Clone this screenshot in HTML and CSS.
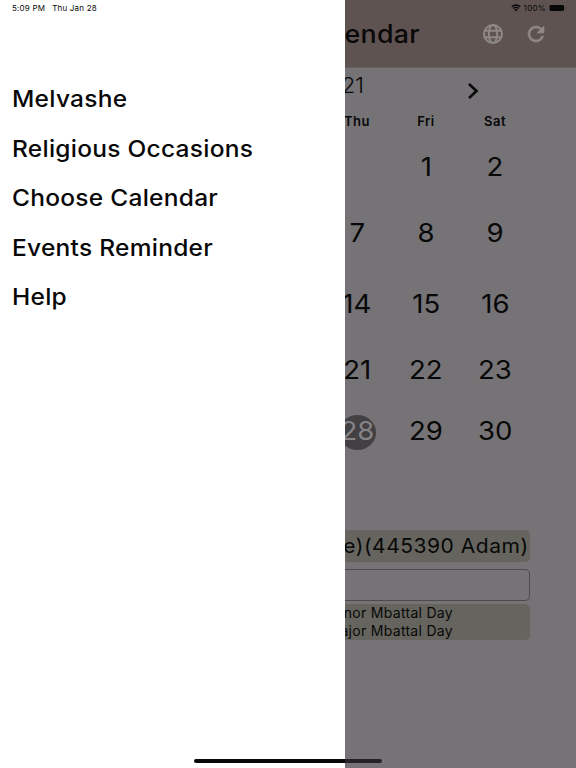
FILE: index.html
```
<!DOCTYPE html>
<html lang="en">
<head>
    <meta charset="UTF-8">
    <meta name="viewport" content="width=device-width, initial-scale=1.0">
    <title>Calendar</title>
    <link rel="stylesheet" href="styles.css">
</head>
<body>
    <nav class="drawer">
        <div class="clock"><span>5:09 PM</span><span>Thu Jan 28</span></div>
        <ul class="menu">
            <li>Melvashe</li>
            <li>Religious Occasions</li>
            <li>Choose Calendar</li>
            <li>Events Reminder</li>
            <li>Help</li>
        </ul>
    </nav>
    <main class="page">
        <header class="toolbar">
            <div class="status">
                <svg class="wifi" viewBox="0 0 10 8"><path d="M.7 2.8Q5-.8 9.300 2.800M2.300 4.500Q5 2.300 7.700 4.500" fill="none" stroke="#080707" stroke-width="1.300"/><path d="M3.300 5.600Q5 4.500 6.700 5.600L5 7.400Z" fill="#080707"/></svg>
                <span>100%</span>
                <svg class="battery" viewBox="0 0 18 8"><rect x=".5" y="1" width="14.500" height="6" rx="1.400" fill="#080707"/><path d="M16.500 3v2" stroke="#4a403f"/></svg>
            </div>
            <div class="heading">
                <h1>Calendar</h1>
                <svg class="globe" viewBox="0 0 22 22"><g fill="none" stroke="#8e8886" stroke-width="2"><circle cx="11" cy="11" r="9"/><ellipse cx="11" cy="11" rx="4.200" ry="9"/><path d="M3 7.700h16M3 14.300h16"/></g></svg>
                <svg class="refresh" viewBox="0 0 24 24"><path fill="#8e8886" stroke="#8e8886" stroke-width=".6" d="M17.650 6.350A7.960 7.960 0 0 0 12 4a8 8 0 1 0 7.730 10h-2.080A6 6 0 1 1 12 6c1.660 0 3.140.69 4.220 1.780L13 11h7V4z"/></svg>
            </div>
        </header>
        <div class="month">
            <span>2021</span>
            <svg class="next" viewBox="0 0 12 18"><path d="M2 2l7.500 7L2 16" fill="none" stroke="#080808" stroke-width="2.600"/></svg>
        </div>
        <div class="weekdays"><span>Thu</span><span>Fri</span><span>Sat</span></div>
        <div class="days">
            <span></span><span>1</span><span>2</span>
            <span>7</span><span>8</span><span>9</span>
            <span>14</span><span>15</span><span>16</span>
            <span>21</span><span>22</span><span>23</span>
            <span class="today">28</span><span>29</span><span>30</span>
        </div>
        <div class="date"><span>e)(445390 Adam)</span></div>
        <div class="field"></div>
        <div class="events">
            <span>Minor Mbattal Day</span>
            <span>Major Mbattal Day</span>
        </div>
    </main>
    <div class="home-bar"></div>
</body>
</html>
```
FILE: styles.css
```
* {
    box-sizing: border-box;
}
body {
    margin: 0;
    display: flex;
    height: 768px;
    overflow: hidden;
    position: relative;
    background: #fff;
    color: #080808;
    font-family: Inter, "Liberation Sans", sans-serif;
}
.drawer {
    width: 345px;
    flex: none;
}
.clock {
    display: flex;
    gap: 7px;
    height: 16px;
    padding-left: 12px;
    font-size: 8px;
    line-height: 16px;
    letter-spacing: 0.2px;
}
.menu {
    list-style: none;
    margin: 58px 0 0;
    padding: 0 0 0 11.5px;
}
.menu li {
    width: 260px;
    height: 49.5px;
    font-size: 23px;
    font-weight: 450;
    line-height: 50px;
    letter-spacing: 0.25px;
    white-space: nowrap;
    transform: scaleX(1.065);
    transform-origin: left;
}
.page {
    width: 231px;
    overflow: hidden;
    background: #757376;
    white-space: nowrap;
}
.toolbar {
    height: 68px;
    background: #5f5351;
    border-bottom: 1px solid #666061;
}
.status {
    display: flex;
    justify-content: flex-end;
    align-items: center;
    gap: 3px;
    height: 16px;
    padding-right: 9px;
    font-size: 8px;
    letter-spacing: 0.3px;
}
.wifi {
    width: 10px;
    height: 8px;
}
.battery {
    width: 18px;
    height: 8px;
}
.heading {
    display: flex;
    align-items: center;
    height: 36px;
}
.heading h1 {
    display: flex;
    justify-content: flex-end;
    width: 75px;
    margin: 0 62px 0 0;
    font-size: 25px;
    font-weight: 500;
    letter-spacing: 0.3px;
    transform: scaleX(1.07);
    transform-origin: right;
}
.globe {
    width: 22px;
    height: 22px;
    margin-right: 20px;
}
.refresh {
    width: 24px;
    height: 24px;
}
.month {
    display: flex;
    align-items: center;
    height: 36px;
    font-size: 22px;
    font-weight: 300;
}
.month span {
    display: flex;
    justify-content: flex-end;
    width: 19px;
    margin: -2px 103px 0 0;
}
.next {
    width: 12px;
    height: 18px;
    margin-top: 10px;
}
.weekdays,
.days {
    display: grid;
    grid-template-columns: repeat(3, 69px);
    margin-left: -22.5px;
    text-align: center;
}
.weekdays {
    height: 30px;
    line-height: 34px;
    font-size: 13px;
    font-weight: 600;
    letter-spacing: 0.5px;
}
.days {
    grid-template-rows: 65px 66px 76px 56px 66px;
    align-items: center;
    justify-items: center;
    font-size: 26px;
}
.days span {
    transform: scaleX(1.06);
}
.today {
    width: 35px;
    height: 35px;
    margin-top: 5px;
    line-height: 31px;
    border-radius: 50%;
    background: #424043;
    color: #858386;
}
.date,
.field,
.events {
    width: 185px;
    border-radius: 0 5px 5px 0;
}
.date {
    display: flex;
    justify-content: flex-end;
    height: 32px;
    margin-top: 67px;
    padding-right: 1px;
    background: #65645e;
    font-size: 20px;
    line-height: 32px;
    letter-spacing: 0.5px;
}
.date span {
    transform: scaleX(1.05);
    transform-origin: right;
}
.field {
    height: 32px;
    margin-top: 7px;
    border: 1px solid #4c4a4b;
    border-left: 0;
}
.events {
    display: flex;
    flex-direction: column;
    align-items: flex-end;
    height: 36px;
    margin-top: 3px;
    padding-right: 77px;
    background: #65645e;
    font-size: 14px;
    line-height: 18px;
    letter-spacing: 0.3px;
}
.home-bar {
    position: absolute;
    left: 194px;
    bottom: 5px;
    width: 188px;
    height: 4px;
    border-radius: 2px;
    background: linear-gradient(90deg, #080808 151px, #242225 151px);
}
```
